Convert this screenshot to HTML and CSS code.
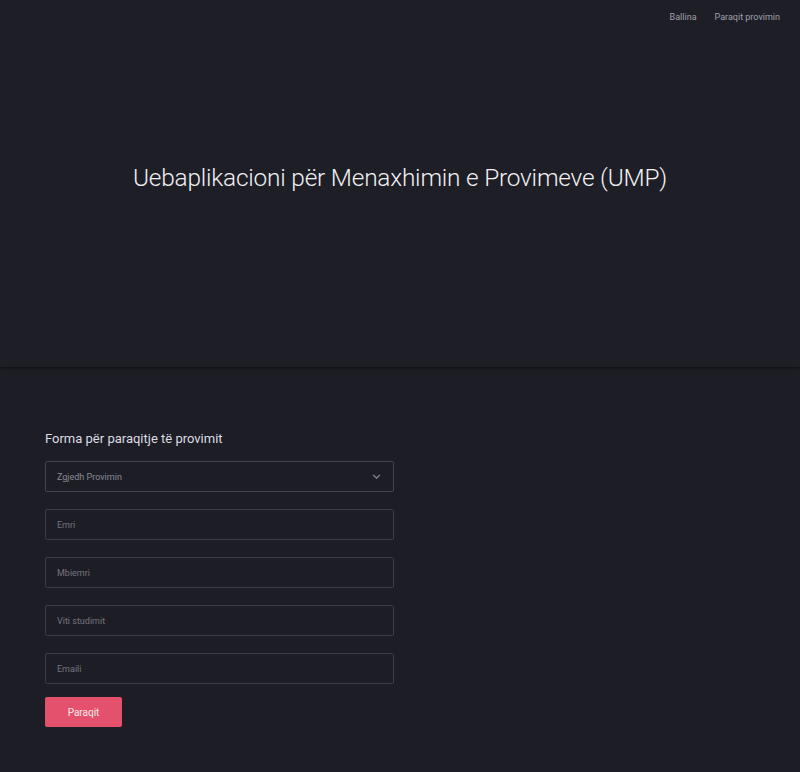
FILE: index.html
```html
<!DOCTYPE html>
<html lang="sq">
<head>
<meta charset="utf-8">
<title>UMP</title>
<link rel="stylesheet" href="styles.css">
</head>
<body>
<header class="hero">
  <nav class="nav">
    <a href="#">Ballina</a>
    <a href="#">Paraqit provimin</a>
  </nav>
  <h1 class="title">Uebaplikacioni për Menaxhimin e Provimeve (UMP)</h1>
</header>
<main class="main">
  <form class="form">
    <h2 class="form-title">Forma për paraqitje të provimit</h2>
    <div class="field select">
      <span class="ph">Zgjedh Provimin</span>
      <svg class="chev" width="9" height="5" viewBox="0 0 10 6"><path d="M1 1l4 4 4-4" fill="none" stroke="#8a8a94" stroke-width="1.5"/></svg>
    </div>
    <div class="field"><span class="ph">Emri</span></div>
    <div class="field"><span class="ph">Mbiemri</span></div>
    <div class="field"><span class="ph">Viti studimit</span></div>
    <div class="field"><span class="ph">Emaili</span></div>
    <button type="button" class="btn">Paraqit</button>
  </form>
</main>
</body>
</html>
```
FILE: styles.css
```css
* { box-sizing: border-box; }
html, body { margin: 0; padding: 0; }
body {
  background: #1d1d26;
  font-family: Roboto, "Liberation Sans", sans-serif;
  color: #e6e6ea;
  height: 772px;
  overflow: hidden;
}
.hero {
  height: 367px;
  background: #1e1e27;
  box-shadow: 0 1px 3px rgba(0,0,0,0.6);
  position: relative;
  display: flex;
  flex-direction: column;
}
.nav {
  display: flex;
  justify-content: flex-end;
  gap: 18px;
  padding: 12px 20px 0 0;
}
.nav a {
  color: #a0a0aa;
  font-size: 9px;
  text-decoration: none;
}
.title {
  margin: 141px 0 0 0;
  text-align: center;
  font-weight: 300;
  font-size: 24.4px;
  color: #f0f0f2;
  letter-spacing: -0.2px;
}
.main {
  padding: 64px 0 0 45px;
}
.form {
  width: 349px;
  display: flex;
  flex-direction: column;
}
.form-title {
  margin: 0 0 15px 0;
  font-weight: 400;
  font-size: 13px;
  color: #dcdce2;
}
.field {
  height: 31px;
  border: 1px solid #3b3b45;
  border-radius: 2px;
  display: flex;
  align-items: center;
  justify-content: space-between;
  padding: 0 11px;
  margin-bottom: 17px;
}
.field.select { border-color: #44444e; }
.ph {
  font-size: 9px;
  color: #75757f;
}
.select .ph { color: #8a8a94; }
.chev { margin-right: 1px; }
.btn {
  align-self: flex-start;
  width: 77px;
  height: 30px;
  margin-top: -4px;
  background: #e3516c;
  border: none;
  border-radius: 2px;
  color: #f8e8ec;
  font-family: Roboto, "Liberation Sans", sans-serif;
  font-size: 10px;
}
```
